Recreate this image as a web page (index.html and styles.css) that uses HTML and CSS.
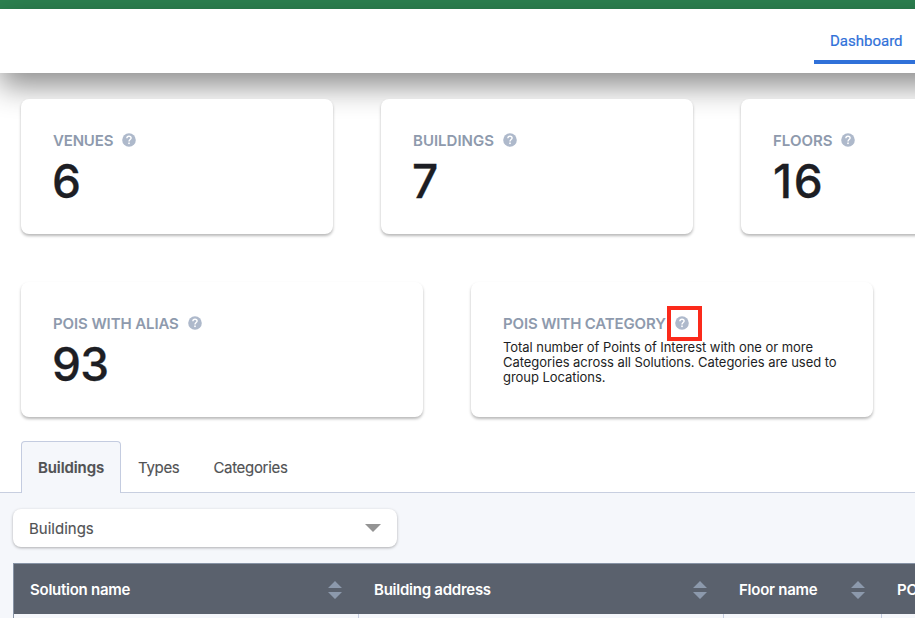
FILE: index.html
```html
<!DOCTYPE html>
<html lang="en">
<head>
<meta charset="utf-8">
<title>Dashboard</title>
<link rel="stylesheet" href="styles.css">
</head>
<body>
<svg class="defs" width="0" height="0" aria-hidden="true">
  <symbol id="help" viewBox="0 0 14 14">
    <circle cx="7" cy="7" r="6.8" fill="#aeb9cb"/>
    <path d="M4.9 5.3C4.9 4 5.8 3.2 7 3.2S9.1 4 9.1 5.1C9.1 6.5 7 6.7 7 8.4" fill="none" stroke="#fff" stroke-width="1.4"/>
    <rect x="6.2" y="9.5" width="1.6" height="1.6" fill="#fff"/>
  </symbol>
  <symbol id="sort" viewBox="0 0 14 18">
    <path d="M0 7 7 0l7 7zM0 11h14l-7 7z" fill="#8c99ac"/>
  </symbol>
</svg>
<div class="topbar"></div>
<header class="header">
  <nav><a class="nav-link">Dashboard</a></nav>
</header>
<main>
  <section class="stats">
    <article class="card"><h2 class="label"><span class="t-venues">VENUES</span><svg class="help"><use href="#help"/></svg></h2><p class="value">6</p></article>
    <article class="card"><h2 class="label"><span>BUILDINGS</span><svg class="help"><use href="#help"/></svg></h2><p class="value">7</p></article>
    <article class="card"><h2 class="label"><span>FLOORS</span><svg class="help"><use href="#help"/></svg></h2><p class="value value-spaced">16</p></article>
  </section>
  <section class="stats stats-wide">
    <article class="card"><h2 class="label"><span class="t-alias">POIS WITH ALIAS</span><svg class="help"><use href="#help"/></svg></h2><p class="value value-tight">93</p></article>
    <article class="card"><h2 class="label"><span class="t-category">POIS WITH CATEGORY</span><span class="marked"><svg class="help"><use href="#help"/></svg></span></h2>
      <p class="description">Total number of Points of Interest with one or more<br>Categories across all Solutions. Categories are used to<br>group Locations.</p></article>
  </section>
  <div class="tabs">
    <a class="tab active">Buildings</a><a class="tab">Types</a><a class="tab">Categories</a>
  </div>
  <section class="panel">
    <div class="select"><span>Buildings</span><svg width="16" height="8" viewBox="0 0 16 8"><path d="M0 0h16L8 8z" fill="#949494"/></svg></div>
    <div class="table">
      <div class="th"><span>Solution name</span><svg class="sort"><use href="#sort"/></svg></div>
      <div class="th"><span>Building address</span><svg class="sort"><use href="#sort"/></svg></div>
      <div class="th"><span>Floor name</span><svg class="sort"><use href="#sort"/></svg></div>
      <div class="th"><span>PO</span></div>
      <div class="td"></div><div class="td"></div><div class="td"></div><div class="td"></div>
    </div>
  </section>
</main>
</body>
</html>
```
FILE: styles.css
```css
* { box-sizing: border-box; }
html, body { height: 618px; overflow: hidden; }
body { margin: 0; background: #fff; font-family: Inter, "Liberation Sans", sans-serif; color: #1d1e24; }
h2, p { margin: 0; }
.defs { display: none; }
.topbar { height: 9px; background: #2c8150; }
.header { height: 64px; margin-right: -60px; padding-right: 60px; background: #fff; display: flex; justify-content: flex-end; box-shadow: 0 13px 30px rgba(0, 0, 0, .45); }
.nav-link { display: block; width: 101px; height: 55px; padding-left: 16px; border-bottom: 4px solid #3071d9; color: #3071d9; font: 400 15px/64px Roboto, sans-serif; letter-spacing: 0; -webkit-text-stroke: .2px #3071d9; }
main { width: 915px; }
.stats { display: flex; gap: 48px; padding: 26px 0 0 21px; position: relative; }
.stats-wide { padding-top: 48px; }
.card { flex: none; width: 312px; height: 135px; padding: 32px; border-radius: 8px; background: #fff; box-shadow: 0 2px 3px rgba(0, 0, 0, .28); }
.stats-wide .card { width: 402px; }
.label { display: flex; align-items: center; height: 20px; font-size: 15px; line-height: 20px; font-weight: 600; color: #8e9aad; white-space: nowrap; }
.t-venues { letter-spacing: -.17px; }
.t-alias { letter-spacing: -.1px; }
.t-category { letter-spacing: -.14px; }
.help { flex: none; display: block; width: 14px; height: 14px; margin: -2px 0 0 9px; }
.value { margin: 2px 0 0 -1px; font-size: 46px; line-height: 56px; font-weight: 500; -webkit-text-stroke: .3px #1d1e24; }
.value-spaced { letter-spacing: 1.6px; margin-left: 0; }
.value-tight { letter-spacing: -.8px; }
.marked { flex: none; width: 35px; height: 35px; margin: -1px 0 0 1px; border: 4px solid #fb2a1b; padding: 6px 0 0 4px; }
.marked .help { margin: 0; }
.description { margin-top: 6px; font-size: 13px; line-height: 15px; letter-spacing: -.045px; white-space: nowrap; }
.tabs { display: flex; width: 915px; height: 52px; margin-top: 24px; padding-left: 21px; border-bottom: 1px solid #c8cfe0; color: #515254; font-size: 15px; line-height: 52px; letter-spacing: -.32px; -webkit-text-stroke: .15px #515254; }
.tab { padding: 1px 17px; }
.tab.active { width: 100px; height: 52px; padding: 0 16px; border: 1px solid #c4cce0; border-bottom: 0; border-radius: 4px 4px 0 0; background: #f5f7fb; font-weight: 600; letter-spacing: -.1px; }
.panel { height: 126px; width: 915px; overflow: hidden; padding: 16px 0 0 13px; background: #f5f7fb; }
.select { display: flex; justify-content: space-between; align-items: center; width: 384px; height: 38px; padding: 0 16px; border-radius: 8px; background: #fff; box-shadow: 0 1px 3px rgba(0, 0, 0, .3); color: #515254; font-size: 15px; -webkit-text-stroke: .15px #515254; }
.table { display: grid; grid-template-columns: 345px 365px 158px 33px; grid-template-rows: 51px 10px; width: 902px; margin-top: 16px; border-left: 1px solid #8793a5; }
.th { display: flex; align-items: center; justify-content: space-between; padding: 1px 17px 0 16px; border-top: 1px solid #8793a5; background: #5a616d; color: #fff; font-size: 15px; font-weight: 600; letter-spacing: -.25px; }
.th + .th { padding-left: 15px; }
.sort { width: 14px; height: 18px; }
.td { border-right: 1px solid #c4cce0; }
.td:last-child { border-right: 0; }
```
